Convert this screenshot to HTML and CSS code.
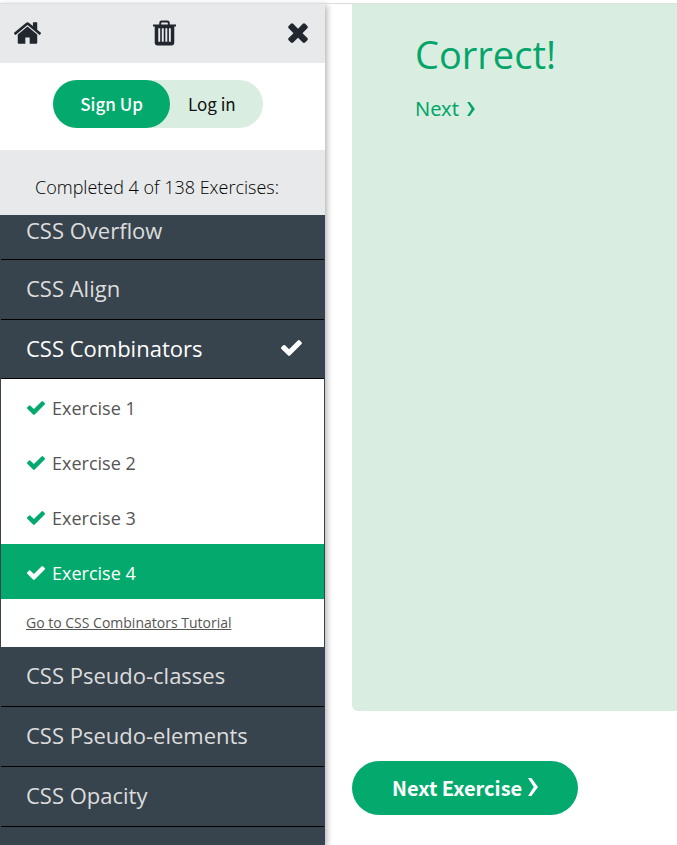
FILE: index.html
```html
<!DOCTYPE html>
<html lang="en">
<head>
<meta charset="utf-8">
<title>CSS Exercises</title>
<link rel="stylesheet" href="styles.css">
</head>
<body>
<svg class="sprite" aria-hidden="true">
  <symbol id="check" viewBox="121 334 1550 1188"><path d="M1671 566q0 40-28 68l-724 724-136 136q-28 28-68 28t-68-28l-136-136-362-362q-28-28-28-68t28-68l136-136q28-28 68-28t68 28l294 295 656-657q28-28 68-28t68 28l136 136q28 28 28 68z"/></symbol>
  <symbol id="chevron" viewBox="0 0 10 18"><path d="M0 0h3.400L10 9l-6.600 9H0l5.800-9z"/></symbol>
</svg>
<div class="page">
  <aside class="sidebar">
    <header class="toolbar">
      <a href="#" aria-label="Home"><svg class="icon-home" viewBox="97 250 1598 1286"><path d="M1472 992v480q0 26-19 45t-45 19h-384v-384h-256v384h-384q-26 0-45-19t-19-45v-480q0-1 .5-3t.5-3l575-474 575 474q1 2 1 6zm223-69l-62 74q-8 9-21 11h-3q-13 0-21-7l-692-577-692 577q-12 8-24 7-13-2-21-11l-62-74q-8-10-7-23.500t11-21.500l719-599q32-26 76-26t76 26l244 204v-195q0-14 9-23t23-9h192q14 0 23 9t9 23v408l219 182q10 8 11 21.500t-7 23.500z"/></svg></a>
      <button type="button" aria-label="Reset exercises"><svg class="icon-trash" viewBox="0 0 24 26"><path fill-rule="evenodd" d="M6.500 4V2.500Q6.500 0 9 0h6q2.500 0 2.500 2.500V4H24v2.200h-1.800V23q0 3-3 3H4.800q-3 0-3-3V6.200H0V4zM8.500 4h7V2.900q0-.9-.9-.9H9.400q-.9 0-.9.900zM5.500 8v14h2V8zM9.200 8v14h2V8zM12.900 8v14h2V8zM16.600 8v14h2V8z"/></svg></button>
      <button type="button" aria-label="Close menu"><svg class="icon-close" viewBox="302 344 1188 1210"><path d="M1490 1322q0 40-28 68l-136 136q-28 28-68 28t-68-28l-294-294-294 294q-28 28-68 28t-68-28l-136-136q-28-28-28-68t28-68l294-294-294-294q-28-28-28-68t28-68l136-136q28-28 68-28t68 28l294 294 294-294q28-28 68-28t68 28l136 136q28 28 28 68t-28 68l-294 294 294 294q28 28 28 68z"/></svg></button>
    </header>
    <div class="account">
      <div class="account-pill">
        <a class="signup" href="#">Sign Up</a>
        <a class="login" href="#">Log in</a>
      </div>
    </div>
    <p class="progress">Completed 4 of 138 Exercises:</p>
    <nav class="topics">
      <a class="topic" href="#">CSS Overflow</a>
      <a class="topic" href="#">CSS Align</a>
      <a class="topic active" href="#">CSS Combinators <svg class="topic-check"><use href="#check"/></svg></a>
      <div class="exercises">
        <a class="exercise" href="#"><svg><use href="#check"/></svg>Exercise 1</a>
        <a class="exercise" href="#"><svg><use href="#check"/></svg>Exercise 2</a>
        <a class="exercise" href="#"><svg><use href="#check"/></svg>Exercise 3</a>
        <a class="exercise current" href="#"><svg><use href="#check"/></svg>Exercise 4</a>
        <a class="tutorial" href="#">Go to CSS Combinators Tutorial</a>
      </div>
      <a class="topic" href="#">CSS Pseudo-classes</a>
      <a class="topic" href="#">CSS Pseudo-elements</a>
      <a class="topic" href="#">CSS Opacity</a>
      <a class="topic" href="#" aria-label="Next topic"></a>
    </nav>
  </aside>
  <main class="content">
    <section class="result">
      <h1>Correct!</h1>
      <a class="next" href="#">Next <svg><use href="#chevron"/></svg></a>
    </section>
    <a class="next-exercise" href="#">Next Exercise <svg><use href="#chevron"/></svg></a>
  </main>
</div>
</body>
</html>
```
FILE: styles.css
```css
* { box-sizing: border-box; }

body {
  margin: 0;
  background: #fff;
  font-family: "Open Sans", "Noto Sans", sans-serif;
}

a { color: inherit; text-decoration: none; }
svg { fill: currentColor; flex: none; }
.sprite { display: none; }

.page {
  display: flex;
  height: 100vh;
  padding-top: 3px;
  overflow: hidden;
}

.sidebar {
  display: flex;
  flex-direction: column;
  flex: 0 0 325px;
  border-top: 1px solid #dcdddf;
  box-shadow: 2px 2px 6px rgba(0, 0, 0, 0.3);
}

.toolbar {
  display: flex;
  align-items: center;
  justify-content: space-between;
  height: 59px;
  flex: none;
  padding: 0 17px 2px 14px;
  background: #e7e9eb;
  color: #22272f;
}
.toolbar button { padding: 0; border: 0; background: none; color: inherit; }
.toolbar svg { display: block; }
.icon-home { width: 27px; height: 22px; }
.icon-trash { width: 23px; height: 26px; }
.icon-close { width: 20px; height: 20px; }

.account {
  display: flex;
  justify-content: center;
  padding: 17px 9px 22px 0;
  background: #fff;
}
.account-pill {
  display: flex;
  height: 48px;
  border-radius: 24px;
  background: #d9eee1;
  font: 17px/48px "Noto Sans CJK SC", sans-serif;
  color: #111;
}
.signup {
  padding: 0 27px;
  border-radius: 24px;
  background: #04aa6d;
  color: #fff;
  font-weight: 500;
}
.login { padding: 0 27px 0 18px; }

.progress {
  flex: none;
  margin: 0;
  padding: 0 35px;
  background: #e7e9eb;
  color: #000;
  font-size: 18px;
  font-weight: 300;
  line-height: 74px;
  height: 65px;
  white-space: nowrap;
}

.topics {
  flex: 1;
  min-height: 0;
  overflow: hidden;
  padding: 0 1px;
  background: #38444d;
  color: #ddd;
}
.topic {
  display: flex;
  align-items: center;
  justify-content: space-between;
  height: 60px;
  padding: 0 22px 3px 25px;
  border-bottom: 1px solid #000;
  font-size: 22px;
  line-height: 24px;
}
.topic:first-child { height: 45px; padding-bottom: 14px; }
.topic.active { height: 59px; color: #fff; }
.topic-check { width: 21px; height: 16px; }

.exercises { background: #fff; color: #555; }
.exercise {
  display: flex;
  align-items: center;
  gap: 7px;
  height: 55px;
  padding: 2px 26px 0;
  font-size: 18px;
}
.exercise svg { width: 18px; height: 14px; color: #04aa6d; }
.exercise.current { background: #04aa6d; color: #fff; }
.exercise.current svg { color: #fff; }
.tutorial {
  display: block;
  padding: 0 25px;
  font-size: 14px;
  line-height: 48px;
  text-decoration: underline;
}

.content {
  flex: 1;
  min-width: 0;
  padding-left: 27px;
  border-top: 1px solid #dcdddf;
}
.result {
  height: 707px;
  padding: 22px 63px;
  border-radius: 0 0 0 6px;
  background: #d9eee1;
  color: #04a56a;
}
.result h1 {
  margin: 0 0 14px;
  font-size: 38px;
  font-weight: 400;
  line-height: 56px;
}
.next {
  display: flex;
  align-items: center;
  gap: 8px;
  font: 20px/26px "Noto Sans", sans-serif;
}
.next svg { width: 8px; height: 14px; }

.next-exercise {
  display: inline-flex;
  align-items: center;
  gap: 6px;
  height: 54px;
  margin-top: 50px;
  padding: 0 40px 2px;
  border-radius: 27px;
  background: #04aa6d;
  color: #fff;
  font: 700 20px "Noto Sans CJK SC", sans-serif;
}
.next-exercise svg { width: 10px; height: 18px; }
```
